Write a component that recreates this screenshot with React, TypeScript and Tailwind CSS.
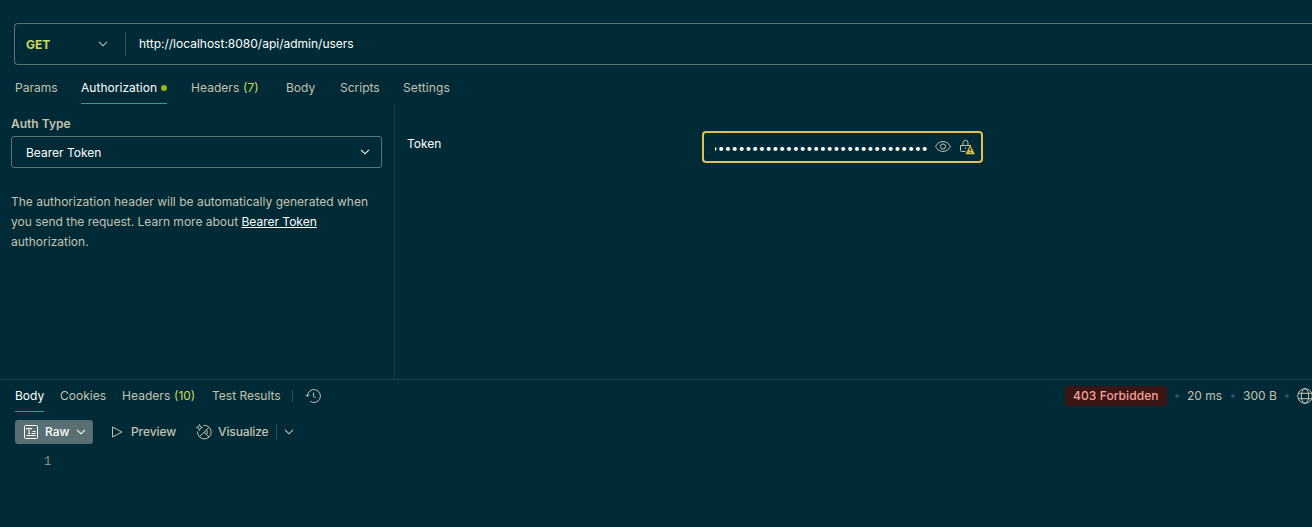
import type { ReactNode } from "react";

function Chevron({ className = "" }: { className?: string }) {
  return (
    <svg className={`shrink-0 ${className}`} width="10" height="6" viewBox="0 0 10 6" fill="none" stroke="currentColor" strokeWidth="1.1">
      <path d="M1 0.8 L5 4.8 L9 0.8" />
    </svg>
  );
}

function Tab({ width, active = false, children }: { width: string; active?: boolean; children: ReactNode }) {
  return (
    <div className={`flex h-full shrink-0 items-center whitespace-nowrap border-b ${width} ${active ? "border-[#2aa198] text-white" : "border-transparent"}`}>
      {children}
    </div>
  );
}

function EyeIcon() {
  return (
    <svg className="shrink-0" width="16" height="16" viewBox="0 0 16 16" fill="none" stroke="#c5c2b0">
      <path d="M0.6 7.5 C3.6 0.9 12.4 0.9 15.4 7.5 C12.4 14.1 3.6 14.1 0.6 7.5 Z" />
      <circle cx="8" cy="7.5" r="2.6" />
    </svg>
  );
}

function LockWarningIcon() {
  return (
    <svg className="shrink-0" width="16" height="16" viewBox="0 0 16 16" fill="none">
      <path d="M6.5 12.5 H2.5 Q1.5 12.5 1.5 11.5 V6.5 H11.5 V8 M4 6.5 V3.8 A2.5 2.5 0 0 1 9 3.8 V6.5 M6.5 8.5 V10" stroke="#c5c2b0" />
      <path d="M11.2 6.5 L15.5 15 H6.9 Z" fill="#e0bd42" stroke="#e0bd42" strokeWidth="0.6" strokeLinejoin="round" />
      <path d="M11.2 8.8 V12 M11.2 12.9 V14.1" stroke="#002b36" strokeWidth="1.2" />
    </svg>
  );
}

function HistoryIcon() {
  return (
    <svg className="shrink-0" width="16" height="16" viewBox="0 0 16 16" fill="none" stroke="currentColor">
      <path d="M2.4 8 A6.5 6.5 0 1 1 5.2 13.4" />
      <path d="M0.5 6.8 L2.4 8.7 L4.4 6.8 M8.5 4.5 V8.5 L10.8 9.8" />
    </svg>
  );
}

function RawIcon() {
  return (
    <svg className="shrink-0" width="14" height="14" viewBox="0 0 14 14" fill="none" stroke="currentColor">
      <rect x="0.5" y="0.5" width="13" height="13" rx="1" />
      <path d="M2.5 4.5 V3.5 H7.5 V4.5 M5 3.5 V8.5 M4 8.5 H6 M8.5 6.5 H11.5 M7.5 8.5 H11.5 M2.5 10.5 H11.5" />
    </svg>
  );
}

function VisualizeIcon() {
  return (
    <svg className="shrink-0" width="16" height="16" viewBox="0 0 16 16" fill="none" stroke="currentColor">
      <path d="M7.5 1.4 A6.8 6.8 0 1 1 1.6 7.4" />
      <path d="M3.5 0.4 L4.3 2.7 L6.6 3.5 L4.3 4.3 L3.5 6.6 L2.7 4.3 L0.4 3.5 L2.7 2.7 Z" strokeWidth="0.9" />
      <path d="M12.8 3.4 L8.2 8.2 L12.8 13 M8.2 8.2 L3.4 12.8 M10.6 5.8 A4.4 4.4 0 0 1 10.6 10.6" />
    </svg>
  );
}

function GlobeIcon() {
  return (
    <svg className="shrink-0" width="16" height="16" viewBox="0 0 16 16" fill="none" stroke="currentColor">
      <circle cx="8" cy="8" r="7.3" />
      <ellipse cx="8" cy="8" rx="3.7" ry="7.3" />
      <path d="M1.4 5.3 H14.6 M1.4 10.7 H14.6" />
    </svg>
  );
}

export default function App() {
  return (
    <div className="flex h-[527px] w-[1312px] flex-col overflow-hidden bg-[#002b36] font-['Inter',sans-serif] text-[12px] leading-5 text-[#c5c2b0]">
      <div className="ml-3.5 mt-[23px] flex h-[42px] shrink-0 items-center rounded-l-[4px] border border-r-0 border-[#5b7379]">
        <div className="flex h-6 w-[111px] items-center justify-between border-r border-[#31515a] pl-[11px] pr-[17px]">
          <span className="pt-0.5 font-bold text-[#cbdc5a]">GET</span>
          <Chevron />
        </div>
        <span className="pl-[13px] text-white">http://localhost:8080/api/admin/users</span>
      </div>

      <nav className="mt-[7px] flex h-8 shrink-0 pl-[15px]">
        <Tab width="w-[66px]">Params</Tab>
        <Tab width="w-[86px]" active>
          <span className="tracking-[0.03px]">Authorization</span>
          <i className="ml-auto h-1.5 w-1.5 rounded-full bg-[#9eb21c]" />
        </Tab>
        <div className="w-6" />
        <Tab width="w-[95px]">
          <span className="w-[52px] tracking-[0.05px]">Headers</span>
          <span className="text-[#cbdc5a]">(7)</span>
        </Tab>
        <Tab width="w-[54px]">Body</Tab>
        <Tab width="w-[63px]">Scripts</Tab>
        <Tab width="w-[60px]"><span className="tracking-[0.12px]">Settings</span></Tab>
      </nav>

      <div className="flex h-[275px] shrink-0">
        <section className="w-[395px] shrink-0 border-r border-[#173f49] pl-[11px] pt-2.5">
          <h2 className="font-semibold">Auth Type</h2>
          <div className="mt-0.5 flex h-8 w-[371px] items-center justify-between rounded-[3px] border border-[#5b7379] pl-3.5 pr-[11px] text-white">
            <span className="pt-0.5">Bearer Token</span>
            <Chevron />
          </div>
          <p className="mt-6 whitespace-nowrap">
            <span className="tracking-[0.01px]">The authorization header will be automatically generated when</span>
            <br />
            you send the request. Learn more about <a className="text-white underline underline-offset-1">Bearer Token</a>
            <br />
            authorization.
          </p>
        </section>
        <section className="flex items-start pl-3 pt-[27px]">
          <span className="mt-[3px] w-[295px] text-white">Token</span>
          <div className="flex h-8 w-[281px] items-center rounded-[4px] border-2 border-[#dfc156] pl-[11px]">
            <div className="mt-0.5 flex w-[213px] justify-end overflow-hidden text-white">
              <span className="whitespace-nowrap text-[12px] tracking-[0.03px]">••••••••••••••••••••••••••••••••</span>
            </div>
            <div className="ml-[7px] flex gap-2">
              <EyeIcon />
              <LockWarningIcon />
            </div>
          </div>
        </section>
      </div>

      <div className="flex h-[33px] shrink-0 border-t border-[#173f49] pl-[15px]">
        <Tab width="w-[29px]" active>Body</Tab>
        <div className="w-4" />
        <Tab width="w-[62px]">Cookies</Tab>
        <Tab width="w-[90px]">
          <span className="w-[52px] tracking-[0.05px]">Headers</span>
          <span className="text-[#cbdc5a]">(10)</span>
        </Tab>
        <Tab width="w-[80px]">Test Results</Tab>
        <div className="mt-2.5 h-3 w-[13px] border-l border-[#264a54]" />
        <div className="flex h-8 items-center"><HistoryIcon /></div>
        <div className="ml-auto flex h-8 items-center whitespace-nowrap">
          <span className="w-[102px] rounded-[3px] bg-[#3b1513] pl-2 font-medium tracking-[0.08px] text-[#f3a29c]">403 Forbidden</span>
          <i className="ml-2 h-1 w-1 rounded-full bg-[#315058]" />
          <span className="ml-2 w-9">20 ms</span>
          <i className="ml-2 h-1 w-1 rounded-full bg-[#315058]" />
          <span className="ml-2 w-[34px]">300 B</span>
          <i className="ml-2 h-1 w-1 rounded-full bg-[#315058]" />
          <span className="ml-2 w-[15px] overflow-hidden"><GlobeIcon /></span>
        </div>
      </div>

      <div className="mt-2 flex h-6 shrink-0 items-center whitespace-nowrap pl-[15px] font-medium">
        <div className="flex h-6 w-[78px] items-center rounded-[3px] bg-[#596f74] pl-[9px] text-white">
          <RawIcon />
          <span className="ml-[7px] w-[31px]">Raw</span>
          <Chevron />
        </div>
        <svg className="ml-[18px] shrink-0" width="12" height="12" viewBox="0 0 12 12" fill="none" stroke="currentColor">
          <path d="M1.5 1 L11 6 L1.5 11 Z" strokeLinejoin="round" />
        </svg>
        <span className="ml-2 w-[65px] tracking-[-0.08px]">Preview</span>
        <VisualizeIcon />
        <span className="ml-1.5 w-[58px] tracking-[-0.12px]">Visualize</span>
        <div className="h-4 w-2 border-l border-[#264a54]" />
        <Chevron />
      </div>
      <div className="pl-11 pt-2 font-['Liberation_Mono',monospace] text-[12px] text-[#8b9490]">1</div>
    </div>
  );
}
